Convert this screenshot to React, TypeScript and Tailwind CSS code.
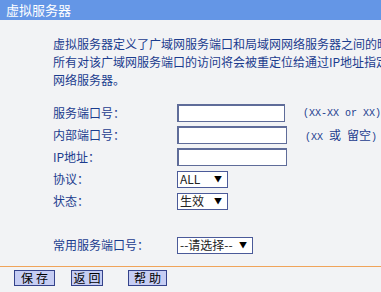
const cjk = { fontFamily: '"Noto Sans CJK SC", "Liberation Sans", sans-serif' };
const mono = { fontFamily: '"Liberation Mono", "Noto Sans CJK SC", monospace' };

function TextBox() {
  return <div className="h-[18px] w-[110px] border border-[#5f6c99] border-l-2 border-t-2 bg-white" />;
}

function Select({ label, width }: { label: string; width: string }) {
  return (
    <div
      className={`flex h-[17px] items-center justify-between whitespace-nowrap border border-[#4b5a99] bg-white pl-[2px] pr-[5px] text-[12px] leading-none text-[#222] ${width}`}
    >
      <span>{label}</span>
      <span className="text-[8px] text-black">▼</span>
    </div>
  );
}

function Row({ label, children }: { label: string; children: React.ReactNode }) {
  return (
    <div className="flex h-[22px] items-center">
      <div className="w-[124px] shrink-0">{label}</div>
      {children}
    </div>
  );
}

function Btn({ text, w }: { text: string; w: string }) {
  return (
    <div
      className={`flex h-[16px] shrink-0 items-center justify-center gap-[3px] whitespace-nowrap border border-[#34428a] bg-[#c6cdf3] text-[12px] leading-none text-black ${w}`}
    >
      {text.split("").map((c) => (
        <span key={c}>{c}</span>
      ))}
    </div>
  );
}

export default function App() {
  return (
    <div className="h-[292px] w-[381px] overflow-hidden bg-[#f2f3f5]" style={cjk}>
      <div className="flex h-[20px] items-center bg-[#6496e6] pl-[6px] text-[13px] text-white">虚拟服务器</div>

      <div className="mt-[15px] overflow-hidden whitespace-nowrap pl-[53px] text-[12px] leading-[18px] text-[#1b3c8e]">
        <div>虚拟服务器定义了广域网服务端口和局域网网络服务器之间的映射关系，</div>
        <div>所有对该广域网服务端口的访问将会被重定位给通过IP地址指定的局域</div>
        <div>网络服务器。</div>
      </div>

      <div className="mt-[13px] pl-[53px] text-[12px] text-[#1b3c8e]">
        <Row label="服务端口号：">
          <TextBox />
          <span className="ml-[18px] whitespace-nowrap text-[10px]" style={mono}>
            (XX-XX or XX)
          </span>
        </Row>
        <Row label="内部端口号：">
          <TextBox />
          <span className="ml-[18px] whitespace-nowrap text-[10px]" style={mono}>
            (XX <span className="text-[12px]" style={cjk}>或</span> <span className="text-[12px]" style={cjk}>留空</span>)
          </span>
        </Row>
        <Row label="IP地址：">
          <TextBox />
        </Row>
        <Row label="协议：">
          <Select label="ALL" width="w-[51px]" />
        </Row>
        <Row label="状态：">
          <Select label="生效" width="w-[51px]" />
        </Row>
        <div className="h-[22px]" />
        <Row label="常用服务端口号：">
          <Select label="--请选择--" width="w-[76px]" />
        </Row>
      </div>

      <div className="mt-[10px] h-px bg-[#f0a45a]" />

      <div className="mt-[3px] flex pl-[14px]">
        <Btn text="保存" w="w-[41px]" />
        <div className="w-[16px] shrink-0" />
        <Btn text="返回" w="w-[32px]" />
        <div className="w-[25px] shrink-0" />
        <Btn text="帮助" w="w-[39px]" />
      </div>
    </div>
  );
}
